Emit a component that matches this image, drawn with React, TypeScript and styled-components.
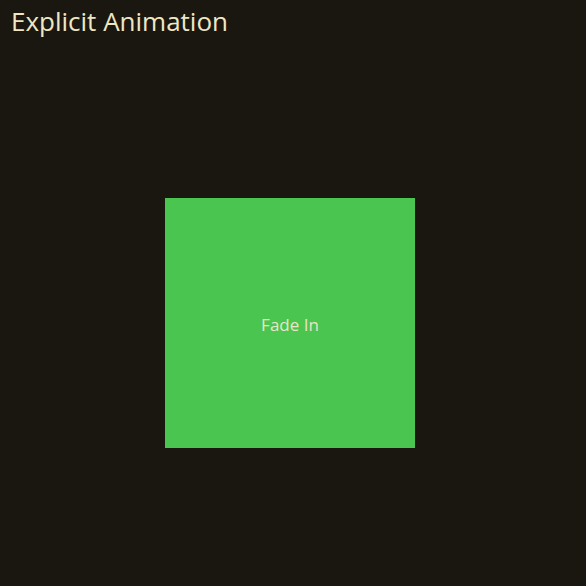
import React from "react";
import styled, { createGlobalStyle } from "styled-components";

const Global = createGlobalStyle`
  html, body { margin: 0; padding: 0; background: #19170f; }
  #root { width: 586px; height: 586px; }
`;

const Page = styled.div`
  width: 586px;
  height: 586px;
  background: #19170f;
  display: flex;
  flex-direction: column;
  font-family: "Open Sans", "Noto Sans", sans-serif;
  box-sizing: border-box;
`;

const Title = styled.h1`
  margin: 0;
  padding: 3px 0 0 11px;
  font-size: 26px;
  font-weight: 400;
  line-height: 36px;
  color: #efe6c4;
`;

const Stage = styled.div`
  flex: 1;
  display: flex;
  justify-content: center;
  align-items: flex-start;
  padding-top: 159px;
  padding-right: 6px;
`;

const Square = styled.div`
  width: 250px;
  height: 250px;
  background: #4ac54f;
  display: flex;
  align-items: center;
  justify-content: center;
  color: #e9e4c8;
  font-size: 17px;
  padding-top: 2px;
  box-sizing: border-box;
`;

export default function App() {
  return (
    <>
      <Global />
      <Page>
        <Title>Explicit Animation</Title>
        <Stage>
          <Square>Fade In</Square>
        </Stage>
      </Page>
    </>
  );
}
